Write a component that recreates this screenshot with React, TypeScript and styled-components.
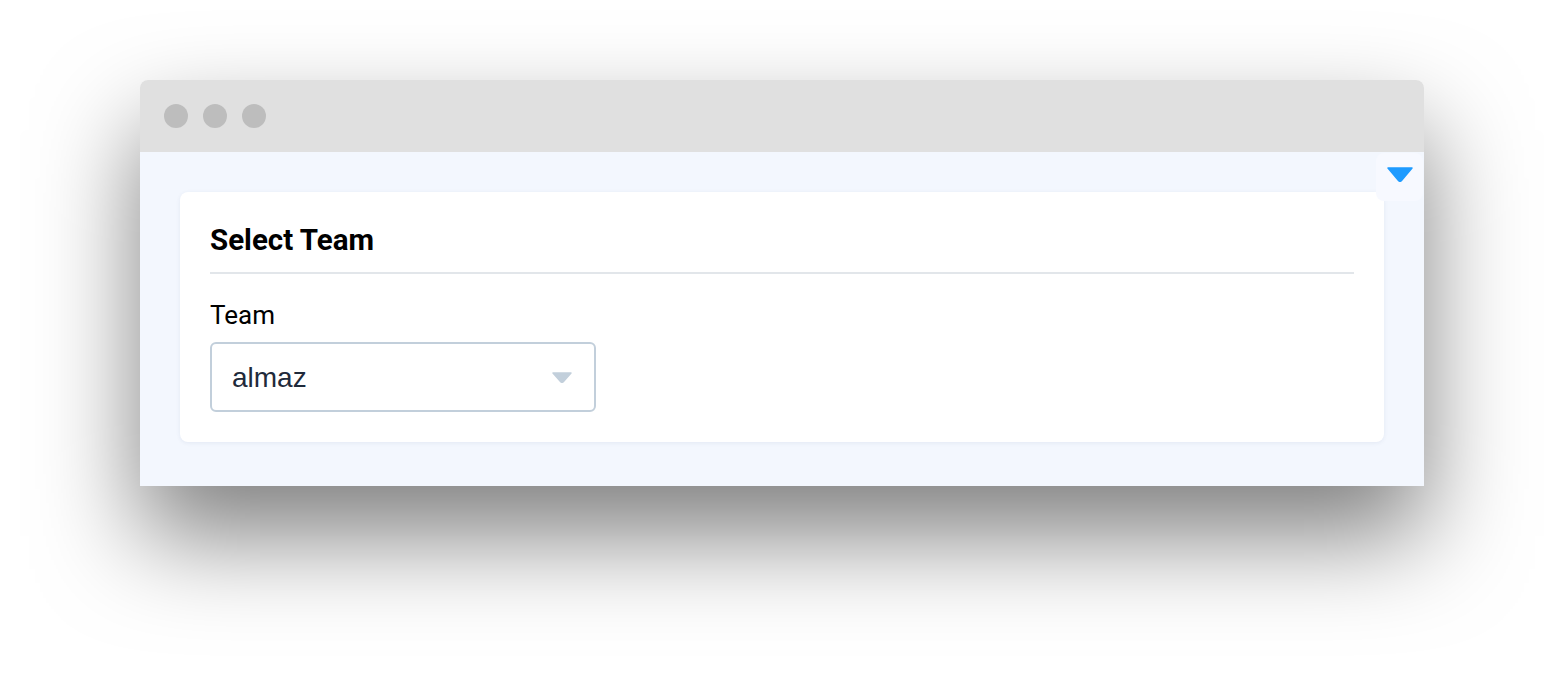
import React from "react";
import styled, { createGlobalStyle } from "styled-components";

const Global = createGlobalStyle`
  html, body { margin: 0; padding: 0; background: #ffffff; }
  body { font-family: Roboto, "Noto Sans", sans-serif; }
`;

const Stage = styled.div`
  padding: 80px 140px 200px;
  background: #ffffff;
`;

const Window = styled.div`
  display: flex;
  flex-direction: column;
  border-radius: 8px 8px 0 0;
  box-shadow: 0 50px 100px rgba(0, 0, 0, 0.5);
`;

const TitleBar = styled.div`
  height: 72px;
  display: flex;
  align-items: center;
  gap: 15px;
  padding-left: 24px;
  background: #e0e0e0;
  border-radius: 8px 8px 0 0;
`;

const Dot = styled.span`
  width: 24px;
  height: 24px;
  border-radius: 50%;
  background: #bdbdbd;
`;

const Content = styled.div`
  position: relative;
  background: #f3f7fe;
  padding: 40px 40px 44px;
`;

const Toggle = styled.button`
  position: absolute;
  top: 1px;
  right: 1px;
  width: 47px;
  height: 48px;
  box-sizing: border-box;
  border: none;
  padding: 0 0 5px;
  border-radius: 8px;
  background: #f7f9ff;
  display: flex;
  align-items: center;
  justify-content: center;
  z-index: 2;
`;

const Card = styled.div`
  background: #ffffff;
  border-radius: 8px;
  padding: 32px 30px 30px;
  box-shadow: 0 1px 4px rgba(40, 60, 110, 0.08);
`;

const Heading = styled.h2`
  margin: 0;
  padding-bottom: 16px;
  border-bottom: 2px solid #e2e6ea;
  font-family: Roboto, sans-serif;
  font-weight: 700;
  font-size: 29.5px;
  line-height: 32px;
  color: #000000;
`;

const Label = styled.label`
  display: block;
  margin-top: 26px;
  font-family: Roboto, sans-serif;
  font-size: 26px;
  line-height: 30px;
  color: #000000;
`;

const SelectBox = styled.div`
  margin-top: 12px;
  width: 386px;
  height: 70px;
  box-sizing: border-box;
  border: 2px solid #c2cfdb;
  border-radius: 6px;
  display: flex;
  align-items: center;
  justify-content: space-between;
  padding: 0 22px 0 20px;
  background: #ffffff;
`;

const Value = styled.span`
  font-family: "Liberation Sans", Arial, sans-serif;
  font-size: 28px;
  color: #1f2a3b;
  padding-top: 2px;
`;

const Caret = ({ w, h, color }: { w: number; h: number; color: string }) => (
  <svg width={w} height={h} viewBox={`0 0 ${w} ${h}`}>
    <path
      d={`M1 1 L${w - 1} 1 L${w / 2 + 1.5} ${h - 1.5} Q${w / 2} ${h} ${w / 2 - 1.5} ${h - 1.5} Z`}
      fill={color}
      stroke={color}
      strokeWidth="1.5"
      strokeLinejoin="round"
    />
  </svg>
);

export default function App() {
  return (
    <>
      <Global />
      <Stage>
        <Window>
          <TitleBar>
            <Dot />
            <Dot />
            <Dot />
          </TitleBar>
          <Content>
            <Toggle aria-label="toggle">
              <Caret w={26} h={15} color="#1e9bff" />
            </Toggle>
            <Card>
              <Heading>Select Team</Heading>
              <Label>Team</Label>
              <SelectBox>
                <Value>almaz</Value>
                <Caret w={20} h={11} color="#c2cfdb" />
              </SelectBox>
            </Card>
          </Content>
        </Window>
      </Stage>
    </>
  );
}
